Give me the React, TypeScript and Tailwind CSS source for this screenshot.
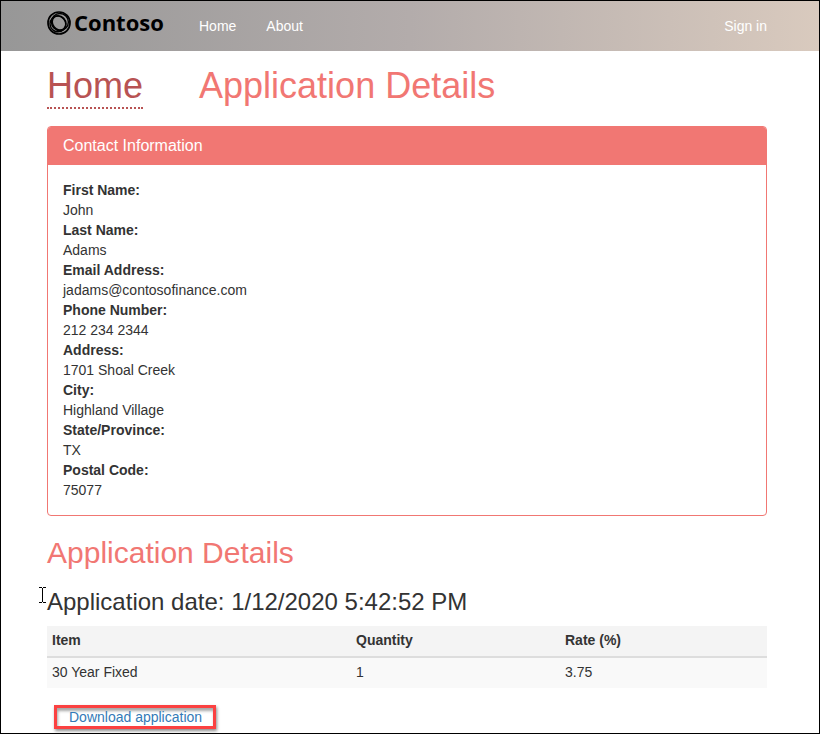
const contact = [
  ["First Name:", "John"],
  ["Last Name:", "Adams"],
  ["Email Address:", "jadams@contosofinance.com"],
  ["Phone Number:", "212 234 2344"],
  ["Address:", "1701 Shoal Creek"],
  ["City:", "Highland Village"],
  ["State/Province:", "TX"],
  ["Postal Code:", "75077"],
];

function Logo() {
  return (
    <a className="flex h-6 w-[152px] items-center gap-[3px] text-black">
      <svg width="24" height="24" viewBox="0 0 24 24" fill="none" stroke="currentColor">
        <circle cx="12" cy="12" r="11" strokeWidth="1.7" />
        <circle cx="12.9" cy="11" r="8.5" strokeWidth="1.4" />
        <circle cx="11" cy="12.8" r="8" strokeWidth="1.4" />
        <ellipse cx="12" cy="12" rx="7.4" ry="6.2" strokeWidth="1.4" transform="rotate(50 12 12)" />
      </svg>
      <span className="-mt-[3px] font-[Open_Sans,Noto_Sans,sans-serif] text-[22px] font-bold leading-6">
        Contoso
      </span>
    </a>
  );
}

function TextCursor() {
  return (
    <svg
      className="absolute left-[38px] top-[586px]"
      width="8"
      height="17"
      viewBox="0 0 8 17"
      fill="none"
      stroke="#000"
      shapeRendering="crispEdges"
    >
      <path d="M0 .5h3M4 .5h3M3.5 1v14M0 15.5h3M4 15.5h3" />
    </svg>
  );
}

export default function App() {
  return (
    <div className="relative h-[734px] w-[820px] overflow-hidden border border-black bg-white font-['Liberation_Sans',Arial,sans-serif] text-sm leading-5 text-[#333]">
      <header className="flex h-[50px] items-start bg-linear-to-r from-[#979797] via-[#b3acab] to-[#d9cabe] pl-[46px] pr-[52px] text-white">
        <div className="pt-[10px]">
          <Logo />
        </div>
        <nav className="flex flex-1 pt-[15px]">
          <a>Home</a>
          <a className="ml-[30px]">About</a>
          <a className="ml-auto">Sign in</a>
        </nav>
      </header>

      <main className="ml-[46px] w-[720px]">
        <div className="flex items-start gap-14 pt-[15px] text-4xl leading-10 text-[#f17773]">
          <h1 className="h-[43px] border-b-2 border-dotted border-[#b85353] text-[#b85353]">Home</h1>
          <h1>Application Details</h1>
        </div>

        <section className="mt-[17px] h-[390px] rounded border border-[#f17773]">
          <h3 className="h-[38px] rounded-t-[3px] bg-[#f17773] px-[15px] pt-[9px] text-base leading-5 text-white">
            Contact Information
          </h3>
          <dl className="px-[15px] pt-[15px]">
            {contact.map(([label, value]) => (
              <div key={label}>
                <dt className="font-bold">{label}</dt>
                <dd>{value}</dd>
              </div>
            ))}
          </dl>
        </section>

        <h2 className="mt-5 text-[30px] leading-[33px] text-[#f17773]">Application Details</h2>
        <h3 className="mt-5 text-2xl leading-[26px]">Application date: 1/12/2020 5:42:52 PM</h3>

        <table className="mt-[11px] w-[720px] table-fixed border-separate border-spacing-0 text-left">
          <colgroup>
            <col className="w-[304px]" />
            <col className="w-[209px]" />
            <col />
          </colgroup>
          <thead>
            <tr className="bg-[#f4f4f4]">
              <th className="h-8 border-b-2 border-[#ddd] px-[5px] pb-[5px] pt-1 align-top">Item</th>
              <th className="h-8 border-b-2 border-[#ddd] px-[5px] pb-[5px] pt-1 align-top">Quantity</th>
              <th className="h-8 border-b-2 border-[#ddd] px-[5px] pb-[5px] pt-1 align-top">Rate (%)</th>
            </tr>
          </thead>
          <tbody>
            <tr className="bg-[#f9f9f9]">
              <td className="h-[30px] px-[5px] pb-[6px] pt-1 align-top">30 Year Fixed</td>
              <td className="h-[30px] px-[5px] pb-[6px] pt-1 align-top">1</td>
              <td className="h-[30px] px-[5px] pb-[6px] pt-1 align-top">3.75</td>
            </tr>
          </tbody>
        </table>

        <div className="ml-[7px] mt-[17px] h-6 w-[162px] border-3 border-[#fb4141] pl-3 leading-[18px] text-[#337ab7] shadow-[1px_2px_3px_rgba(0,0,0,0.45),inset_1px_3px_3px_rgba(0,0,0,0.35)]">
          <a>Download application</a>
        </div>
      </main>
      <TextCursor />
    </div>
  );
}
